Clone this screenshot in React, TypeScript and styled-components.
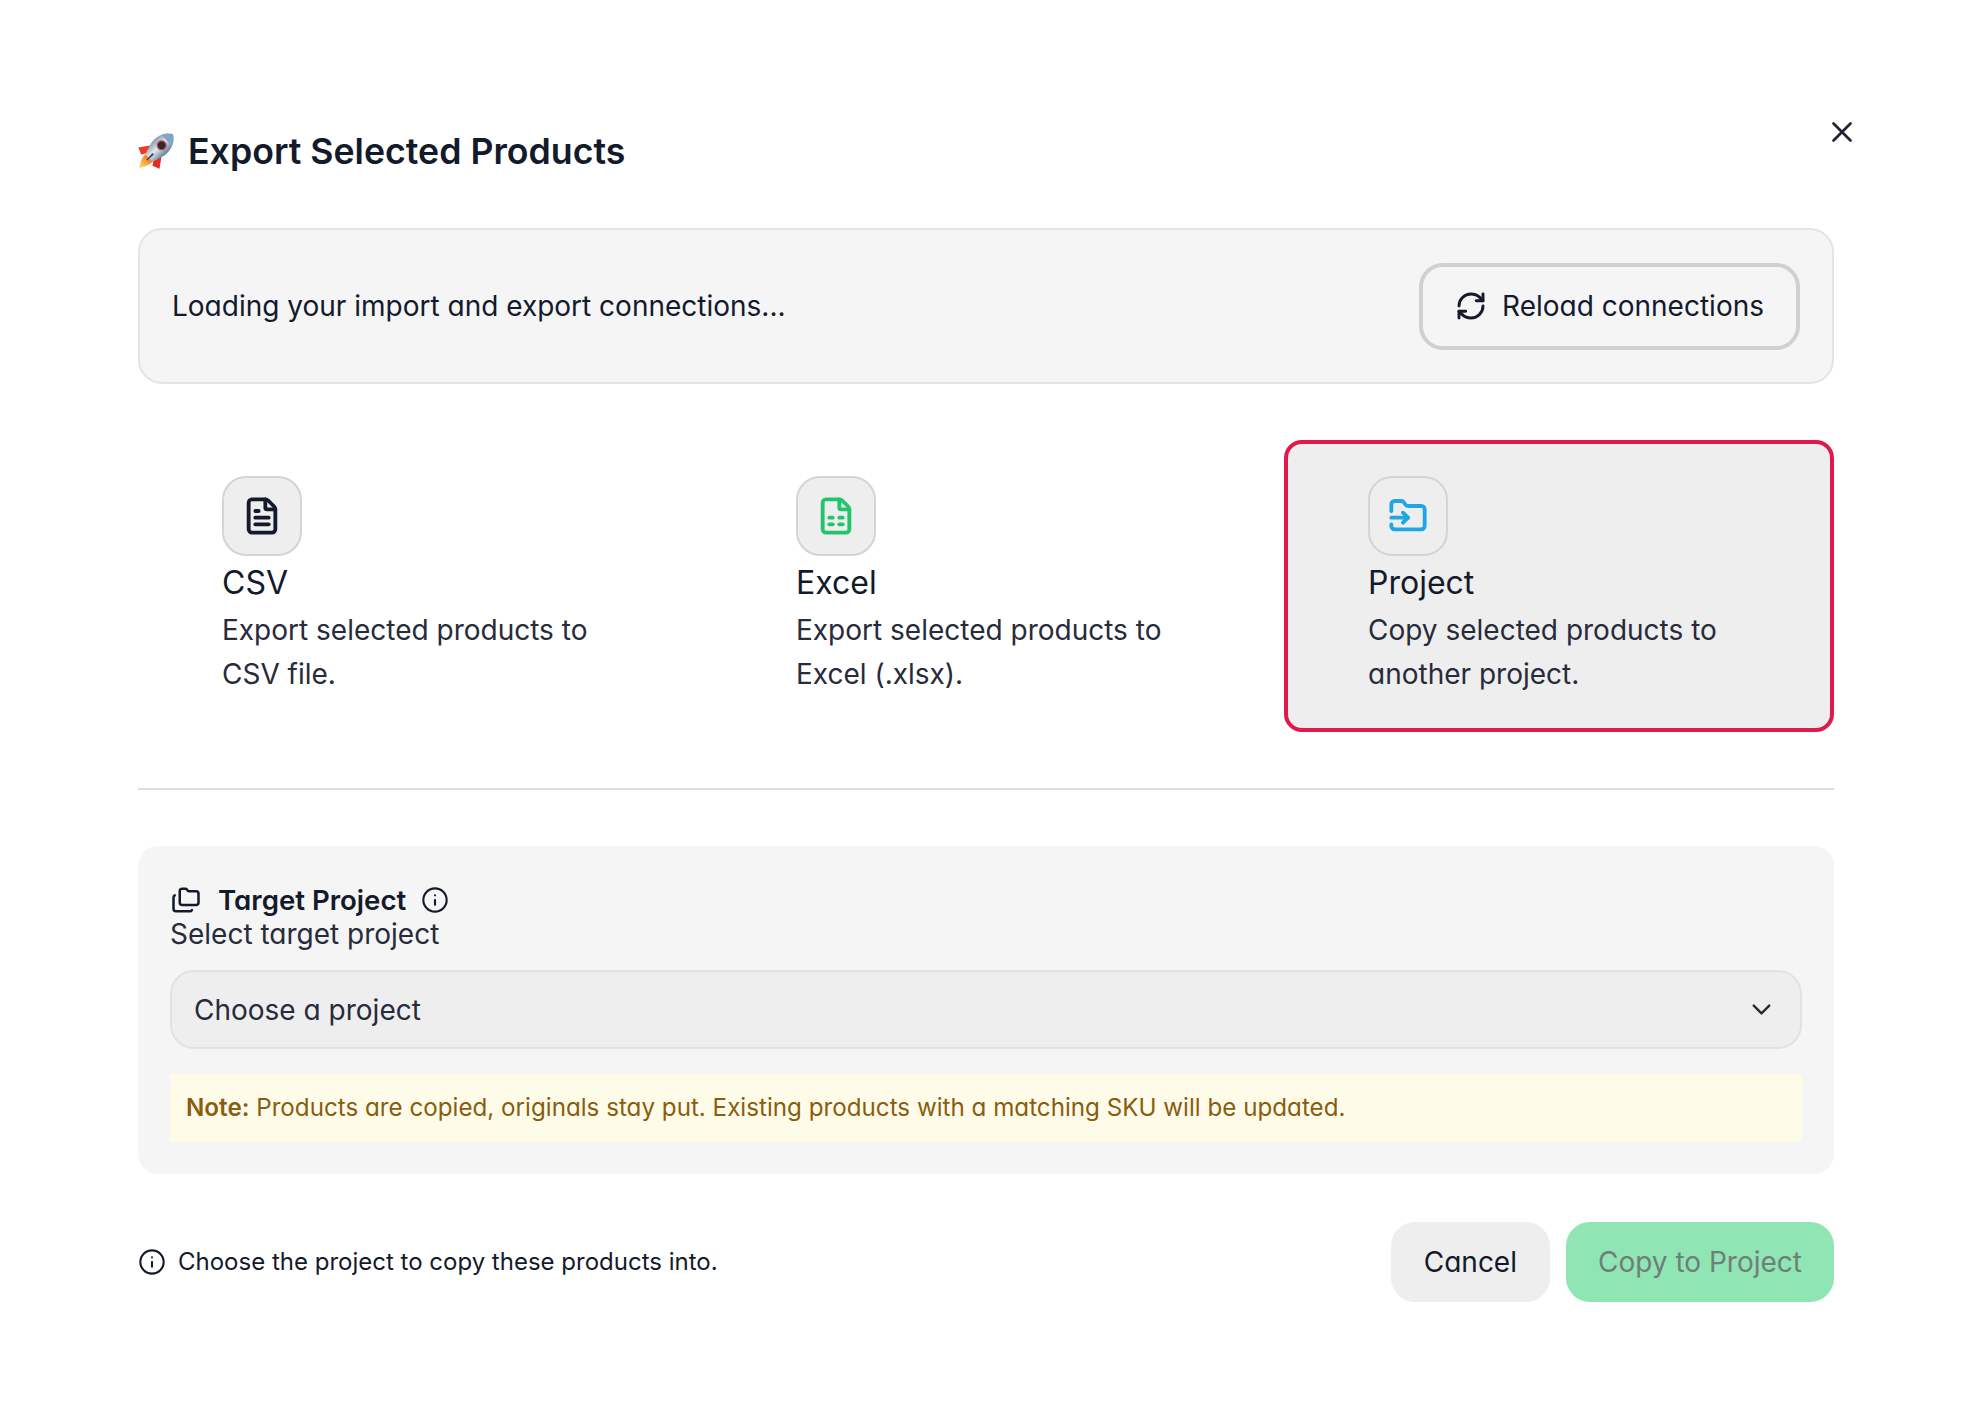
import React from "react"
import styled, { createGlobalStyle } from "styled-components"
import {
  ChevronDown,
  FileSpreadsheet,
  FileText,
  FolderInput,
  Folders,
  Info,
  RefreshCw,
  X,
} from "lucide-react"

const GlobalStyle = createGlobalStyle`
  html, body {
    margin: 0;
    background: #fff;
  }
  body {
    font-family: Inter, "Noto Sans", sans-serif;
    font-feature-settings: "cv11";
    color: #131a2b;
  }
  * {
    box-sizing: border-box;
  }
`

function RocketIcon() {
  return (
    <svg width="36" height="36" viewBox="0 0 36 36" aria-hidden="true">
      <defs>
        <linearGradient id="hull" x1="0" y1="0" x2="1" y2="0">
          <stop offset="0" stopColor="#7f9db4" />
          <stop offset="0.45" stopColor="#e4eaee" />
          <stop offset="1" stopColor="#5d7f9c" />
        </linearGradient>
        <linearGradient id="flame" x1="0" y1="0" x2="0" y2="1">
          <stop offset="0" stopColor="#f2701c" />
          <stop offset="1" stopColor="#fde26a" />
        </linearGradient>
      </defs>
      <g transform="rotate(45 18 18)">
        <path d="M11 17 L3 28 L10 31 L14 25 Z" fill="#ea3a24" />
        <path d="M25 17 L33 28 L26 31 L22 25 Z" fill="#e42c1f" />
        <path d="M13 26 C12 33 16 38 18 42 C20 38 24 33 23 26 Z" fill="url(#flame)" />
        <path
          d="M18 -6 C27 0 29 10 26 19 C25 23 24 26 23 28 L13 28 C12 26 11 23 10 19 C7 10 9 0 18 -6 Z"
          fill="url(#hull)"
        />
        <path d="M18 -6 C22 -3.5 24.5 -0.5 25.5 3 L10.5 3 C11.5 -0.5 14 -3.5 18 -6 Z" fill="#7ea6c6" />
        <circle cx="18" cy="10" r="5" fill="#c9453c" />
        <circle cx="18" cy="10" r="3.6" fill="#2b2a33" />
        <path d="M17 22 L19 22 L18.6 31 L17.4 31 Z" fill="#3a3f4e" />
      </g>
    </svg>
  )
}

const options = [
  {
    key: "csv",
    title: "CSV",
    lines: ["Export selected products to", "CSV file."],
    icon: <FileText size={40} strokeWidth={2.3} color="#131a2b" />,
  },
  {
    key: "excel",
    title: "Excel",
    lines: ["Export selected products to", "Excel (.xlsx)."],
    icon: <FileSpreadsheet size={40} strokeWidth={2.3} color="#22c56d" />,
  },
  {
    key: "project",
    title: "Project",
    lines: ["Copy selected products to", "another project."],
    icon: <FolderInput size={40} strokeWidth={2.3} color="#1ea7e4" />,
    selected: true,
  },
]

export default function App() {
  return (
    <Root>
      <GlobalStyle />
      <Modal>
        <CloseButton aria-label="Close">
          <X size={34} strokeWidth={1.9} />
        </CloseButton>
        <Header>
          <RocketIcon />
          <Title>Export Selected Products</Title>
        </Header>

        <ConnectionBar>
          <span>Loading your import and export connections...</span>
          <ReloadButton>
            <RefreshCw size={32} strokeWidth={2.2} />
            Reload connections
          </ReloadButton>
        </ConnectionBar>

        <OptionGrid>
          {options.map(option => (
            <OptionCard key={option.key} $selected={option.selected}>
              <IconTile>{option.icon}</IconTile>
              <OptionTitle>{option.title}</OptionTitle>
              <OptionText>
                {option.lines[0]}
                <br />
                {option.lines[1]}
              </OptionText>
            </OptionCard>
          ))}
        </OptionGrid>

        <Divider />

        <TargetPanel>
          <TargetHeading>
            <Folders size={30} />
            <TargetTitle>Target Project</TargetTitle>
            <Info size={28} strokeWidth={1.8} />
          </TargetHeading>
          <TargetLabel>Select target project</TargetLabel>
          <SelectBox>
            Choose a project
            <ChevronDown size={31} strokeWidth={1.9} />
          </SelectBox>
          <Note>
            <strong>Note:</strong> Products are copied, originals stay put.
            Existing products with a matching SKU will be updated.
          </Note>
        </TargetPanel>

        <Footer>
          <Hint>
            <Info size={28} strokeWidth={1.8} />
            <span>Choose the project to copy these products into.</span>
          </Hint>
          <Actions>
            <CancelButton>Cancel</CancelButton>
            <CopyButton disabled>Copy to Project</CopyButton>
          </Actions>
        </Footer>
      </Modal>
    </Root>
  )
}

const Root = styled.div`
  width: 1972px;
  height: 1424px;
  overflow: hidden;
  background: #fff;
`

const Modal = styled.div`
  position: relative;
  width: 1696px;
  margin-left: 138px;
  padding-top: 129px;
`

const CloseButton = styled.button`
  position: absolute;
  top: 115px;
  left: 1687px;
  display: flex;
  padding: 0;
  border: none;
  background: none;
  color: #1f2430;
`

const Header = styled.div`
  display: flex;
  align-items: center;
  gap: 14px;
  height: 44px;
  margin-bottom: 55px;
`

const Title = styled.h1`
  margin: 0;
  font-size: 35.7px;
  font-weight: 600;
  line-height: 44px;
  color: #131a2b;
`

const ConnectionBar = styled.div`
  display: flex;
  align-items: center;
  justify-content: space-between;
  height: 156px;
  padding: 32px;
  border: 2px solid #e4e4e4;
  border-radius: 24px;
  background: #f5f5f6;
  font-size: 28px;
`

const ReloadButton = styled.button`
  display: flex;
  align-items: center;
  gap: 15px;
  height: 87px;
  padding: 0 32px;
  border: 4px solid #d0d0d0;
  border-radius: 24px;
  background: transparent;
  font: inherit;
  color: #131a2b;
`

const OptionGrid = styled.div`
  display: grid;
  grid-template-columns: 550px 548px 550px;
  gap: 24px;
  margin-top: 56px;
`

const OptionCard = styled.div<{ $selected?: boolean }>`
  height: 292px;
  padding: 32px 80px;
  border: 4px solid ${props => (props.$selected ? "#e0194d" : "transparent")};
  border-radius: 18px;
  background: ${props => (props.$selected ? "#eeeeee" : "transparent")};
`

const IconTile = styled.div`
  display: flex;
  align-items: center;
  justify-content: center;
  width: 80px;
  height: 80px;
  border: 2px solid #d4d4d4;
  border-radius: 24px;
  background: #eeeeee;
`

const OptionTitle = styled.div`
  font-size: 32px;
  line-height: 53px;
  color: #131a2b;
`

const OptionText = styled.p`
  margin: 0;
  font-size: 28px;
  line-height: 43.5px;
  color: #272b3a;
`

const Divider = styled.hr`
  height: 2px;
  margin: 56px 0;
  border: none;
  background: #dedede;
`

const TargetPanel = styled.div`
  height: 328px;
  padding: 32px;
  border-radius: 20px;
  background: #f5f5f6;
`

const TargetHeading = styled.div`
  display: flex;
  align-items: center;
  height: 44px;
  padding-left: 1px;
  color: #131a2b;
`

const TargetTitle = styled.span`
  margin: 0 15px 0 17px;
  font-size: 27.6px;
  font-weight: 600;
`

const TargetLabel = styled.div`
  margin-bottom: 24px;
  font-size: 28px;
  line-height: 24px;
  color: #272b3a;
`

const SelectBox = styled.div`
  display: flex;
  align-items: center;
  justify-content: space-between;
  height: 79px;
  padding: 0 23px 0 22px;
  border: 2px solid #e2e2e2;
  border-radius: 24px;
  background: #eeeeee;
  font-size: 28px;
  color: #272b3a;
`

const Note = styled.div`
  display: flex;
  align-items: center;
  gap: 0.28em;
  height: 68px;
  margin-top: 25px;
  padding: 0 16px 2px;
  border-radius: 4px;
  background: #fefce8;
  font-size: 24.2px;
  color: #8a5c10;

  strong {
    font-weight: 600;
  }
`

const Footer = styled.div`
  display: flex;
  align-items: center;
  justify-content: space-between;
  margin-top: 48px;
`

const Hint = styled.div`
  display: flex;
  align-items: center;
  gap: 12px;
  font-size: 24px;
  color: #131a2b;

  span {
    padding-bottom: 2px;
  }
`

const Actions = styled.div`
  display: flex;
  gap: 16px;
`

const ActionButton = styled.button`
  height: 80px;
  padding: 0 32px;
  border: none;
  border-radius: 24px;
  font-family: inherit;
  font-feature-settings: inherit;
  font-size: 28px;
`

const CancelButton = styled(ActionButton)`
  padding: 0 33px;
  background: #eeeeee;
  color: #131a2b;
`

const CopyButton = styled(ActionButton)`
  background: #8fe5b3;
  color: #6f7f76;
`
